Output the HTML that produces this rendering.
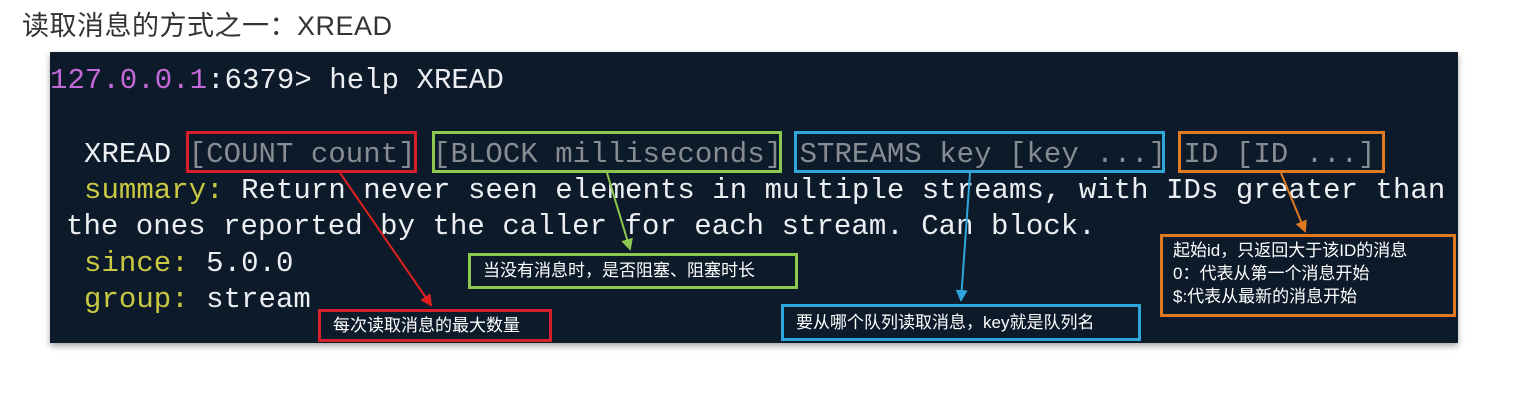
<!DOCTYPE html>
<html><head><meta charset="utf-8"><style>
body{margin:0;width:1517px;height:408px;background:#fff;position:relative;overflow:hidden;font-family:"Liberation Sans","Noto Sans CJK SC",sans-serif}
.t{position:absolute;left:22px;top:4px;font-size:27px;color:#333;letter-spacing:0.5px}
.term{position:absolute;left:50px;top:52px;width:1408px;height:291px;background:#0c1a2a;box-shadow:0 3px 6px rgba(0,0,0,.35);overflow:hidden}
.l{position:absolute;font-family:"Liberation Mono","DejaVu Sans Mono",monospace;font-size:29px;letter-spacing:0.05px;color:#eceff1;white-space:pre;line-height:36px}
.p{color:#c46ad8}.y{color:#c9c842}.g{color:#878c92}
.b{position:absolute;border:3px solid;box-sizing:border-box}
.lab{position:absolute;border:3px solid;box-sizing:border-box;color:#fff;font-size:17px;font-family:"Liberation Sans","Noto Sans CJK SC",sans-serif;padding-left:12px;line-height:23px;background:#0c1a2a}
</style></head><body>
<div class="t">读取消息的方式之一：XREAD</div>
<div class="term">
<div class="l" style="left:0;top:11px"><span class="p">127.0.0.1</span>:6379&gt; help XREAD</div>
<div class="l" style="left:34px;top:85px">XREAD <span class="g">[COUNT count] [BLOCK milliseconds] STREAMS key [key ...] ID [ID ...]</span></div>
<div class="l" style="left:34px;top:121px"><span class="y">summary:</span> Return never seen elements in multiple streams, with IDs greater than</div>
<div class="l" style="left:16px;top:157px">the ones reported by the caller for each stream. Can block.</div>
<div class="l" style="left:34px;top:194px"><span class="y">since:</span> 5.0.0</div>
<div class="l" style="left:34px;top:230px"><span class="y">group:</span> stream</div>
</div>
<div class="b" style="left:186px;top:131px;width:231px;height:42px;border-color:#d8202a"></div>
<div class="b" style="left:432px;top:131px;width:350px;height:42px;border-color:#8cc850"></div>
<div class="b" style="left:794px;top:131px;width:371px;height:42px;border-color:#2ea6dc"></div>
<div class="b" style="left:1178px;top:131px;width:207px;height:42px;border-color:#e07a20"></div>
<svg style="position:absolute;left:0;top:0" width="1517" height="408">
<defs>
<marker id="mr" markerWidth="6" markerHeight="6" refX="5" refY="3" orient="auto"><path d="M0,0L6,3L0,6z" fill="#e02020"/></marker>
<marker id="mg" markerWidth="6" markerHeight="6" refX="5" refY="3" orient="auto"><path d="M0,0L6,3L0,6z" fill="#8cc850"/></marker>
<marker id="mb" markerWidth="6" markerHeight="6" refX="5" refY="3" orient="auto"><path d="M0,0L6,3L0,6z" fill="#2ea6dc"/></marker>
<marker id="mo" markerWidth="6" markerHeight="6" refX="5" refY="3" orient="auto"><path d="M0,0L6,3L0,6z" fill="#e07a20"/></marker>
</defs>
<line x1="340" y1="173" x2="431" y2="305" stroke="#e02020" stroke-width="2" marker-end="url(#mr)"/>
<line x1="607" y1="173" x2="630" y2="249" stroke="#8cc850" stroke-width="2" marker-end="url(#mg)"/>
<line x1="970" y1="173" x2="961" y2="300" stroke="#2ea6dc" stroke-width="2" marker-end="url(#mb)"/>
<line x1="1281" y1="173" x2="1305" y2="231" stroke="#e07a20" stroke-width="2" marker-end="url(#mo)"/>
</svg>
<div class="lab" style="left:468px;top:253px;width:330px;height:36px;border-color:#8cc850;line-height:30px">当没有消息时，是否阻塞、阻塞时长</div>
<div class="lab" style="left:318px;top:309px;width:234px;height:33px;border-color:#d8202a;line-height:27px">每次读取消息的最大数量</div>
<div class="lab" style="left:781px;top:304px;width:360px;height:37px;border-color:#2ea6dc;line-height:31px">要从哪个队列读取消息，key就是队列名</div>
<div class="lab" style="left:1160px;top:234px;width:296px;height:83px;border-color:#e07a20;padding-top:2px;padding-left:10px">起始id，只返回大于该ID的消息<br>0：代表从第一个消息开始<br>$:代表从最新的消息开始</div>
</body></html>
